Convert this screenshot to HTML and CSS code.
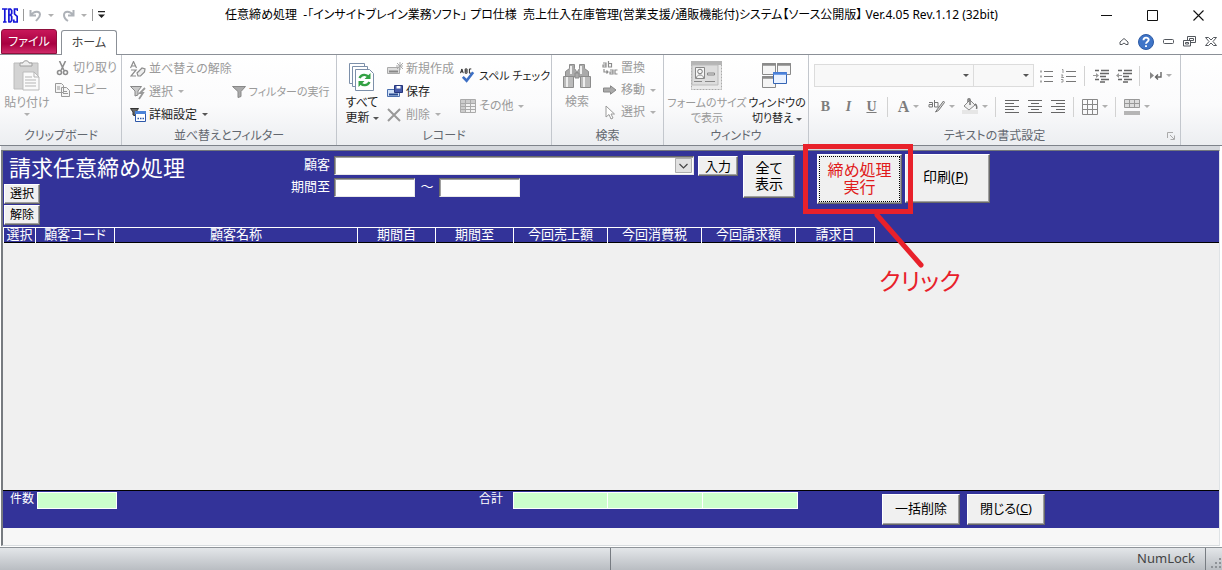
FILE: index.html
```
<!DOCTYPE html>
<html lang="ja">
<head>
<meta charset="utf-8">
<title>任意締め処理</title>
<link rel="stylesheet" href="styles.css">
</head>
<body>
<header class="titlebar">
  <div class="quick">
    <svg class="logo" width="16" height="15" viewBox="0 0 16 15" fill="none" stroke="#1414d8" stroke-width="1.700"><path d="M0 1h5.500M2.800 1v13.500M1 14h3.600M6.900.500v14M6.500 1h2l1.200 1.500v3L8.500 7H7M8.500 7l1.200 1.500v4L8.500 14h-2M15.500 3V1h-3v5l2.700 2.500V14h-3.400v-2.500"/></svg>
    <span class="qsep"></span>
    <button class="qbtn" aria-label="元に戻す"><svg width="13" height="13" viewBox="0 0 13 13" fill="none" stroke="#aeb2b8" stroke-width="2"><path d="M1.500 1v5.500H7M2 6C5 2 11 1.500 11 5.500c0 3-2.500 4.500-4 6.500"/></svg><i class="caret"></i></button>
    <button class="qbtn" aria-label="やり直し"><svg width="13" height="13" viewBox="0 0 13 13" fill="none" stroke="#aeb2b8" stroke-width="2"><path d="M11.500 1v5.500H6M11 6C8 2 2 1.500 2 6c0 3 1.500 4.500 4 6"/></svg><i class="caret"></i></button>
    <span class="qsep"></span>
    <button class="qbtn" aria-label="カスタマイズ"><svg width="7" height="8" viewBox="0 0 7 8"><path d="M0 0h7v1.300H0zM0 3.500h7L3.500 7z" fill="#222"/></svg></button>
  </div>
  <h1 class="caption">任意締め処理&nbsp; -「インサイトブレイン業務ソフト」 プロ仕様&nbsp; 売上仕入在庫管理(営業支援/通販機能付)システム【ソース公開版】 Ver.4.05 Rev.1.12 (32bit)</h1>
  <div class="winbtns">
    <button aria-label="最小化"><svg width="11" height="11"><path d="M0 5.500h11" stroke="#111"/></svg></button>
    <button aria-label="最大化"><svg width="11" height="11"><path d="M.5.5h10v10H.5z" fill="none" stroke="#111"/></svg></button>
    <button aria-label="閉じる"><svg width="11" height="11"><path d="M.5.5l10 10M10.500.5l-10 10" stroke="#111" stroke-width="1.100"/></svg></button>
  </div>
</header>

<nav class="tabs">
  <button class="tab file">ファイル</button>
  <button class="tab home">ホーム</button>
  <div class="mdi">
    <button aria-label="リボンの最小化"><svg width="10" height="8" viewBox="0 0 10 8" fill="#fff" stroke="#53575d"><path d="M1 4l4-3.500L9 4v2.500H7L5 5 3 6.500H1z"/></svg></button>
    <button aria-label="ヘルプ"><svg width="16" height="16" viewBox="0 0 16 16"><circle cx="8" cy="8" r="7.500" fill="#3f75c8" stroke="#2e5ba5"/><path d="M5.500 6.200c0-3.500 5.200-3.300 5.200-.4C10.700 7.700 8 7.700 8 9.800M8 11.200v1.900" fill="none" stroke="#fff" stroke-width="1.900"/></svg></button>
    <button aria-label="ウィンドウを最小化"><svg width="11" height="5"><rect x=".5" y=".5" width="10" height="4" rx="1" fill="none" stroke="#53575d"/></svg></button>
    <button aria-label="元のサイズに戻す"><svg width="13" height="11" fill="#fff" stroke="#53575d"><path d="M4.500.5h8v6h-8z"/><path d="M6.500 2.500h4v2h-4zM.5 4.500h7v5.500h-7z"/><path d="M2.500 6.500h3v1.500h-3z"/></svg></button>
    <button aria-label="フォームを閉じる"><svg width="12" height="9" viewBox="0 0 12 9" fill="#fff" stroke="#53575d"><path d="M.5.5h3L6 3 8.500.5h3L8 4.500l3.500 4h-3L6 6 3.500 8.500h-3L4 4.500z"/></svg></button>
  </div>
</nav>

<section class="ribbon">
  <div class="group g-clip">
    <div class="body">
      <button class="big off paste">
        <svg width="28" height="32" viewBox="0 0 28 32"><path d="M1 3h24v26H1z" fill="#d3d3d3" stroke="#bcbcbc"/><path d="M7 6V3h3c0-3 6-3 6 0h3v3z" fill="#eee" stroke="#9d9d9d"/><path d="M10 12h11l5 5v13H10z" fill="#fafafa" stroke="#bbb"/><path d="M21 12v5h5M12 17h7M12 20h11M12 23h11M12 26h11" fill="none" stroke="#b5b5b5"/></svg>
        <span>貼り付け</span><i class="caret"></i>
      </button>
      <div class="rows">
        <button class="cmd off"><svg width="12" height="15" viewBox="0 0 12 15" fill="none" stroke="#8d8d8d" stroke-width="1.600"><path d="M3 0l4.500 9.500M9 0L4.500 9.500"/><circle cx="3" cy="11.500" r="2"/><circle cx="9" cy="11.500" r="2"/></svg>切り取り</button>
        <button class="cmd off"><svg width="15" height="14" viewBox="0 0 15 14" fill="#f5f5f5" stroke="#999"><path d="M.5.5h6l2 2v7h-8zM6.500 4.500h5l3 3v6h-8z"/><path d="M2 4h3M2 6h3M8 8.500h4M8 10.500h5"/></svg>コピー</button>
      </div>
    </div>
    <div class="name">クリップボード</div>
  </div>

  <div class="group g-sort">
    <div class="body">
      <div class="rows">
        <button class="cmd off"><svg width="16" height="16" viewBox="0 0 16 16" fill="none" stroke="#8d8d8d" stroke-width="1.200"><path d="M.5 7L3.500.5 6.500 7M1.500 5h4M1 9h5L1 15h5"/><path d="M7 12l5-5 3 1-.5 3-4 4H8z" fill="#eee"/></svg>並べ替えの解除</button>
        <button class="cmd off"><svg width="16" height="16" viewBox="0 0 16 16"><path d="M.5 2.500h11L8 7v4l-3 1V7z" fill="#c9c9c9" stroke="#888"/><path d="M15 4l-5 5h3l-4 6" fill="none" stroke="#999" stroke-width="1.800"/></svg>選択<i class="caret"></i></button>
        <button class="cmd"><svg width="16" height="16" viewBox="0 0 16 16"><path d="M.5 1.500h8L6 5v4L3 8V5z" fill="#666" stroke="#333"/><path d="M5.500 4.500h10v10h-10z" fill="#fff" stroke="#2d57a8"/><path d="M5 4h11v3H5z" fill="#4b83d8"/><path d="M7.500 11.500h1.500m1 0h1.500m1 0H14" stroke="#2d57a8" stroke-width="1.500"/></svg>詳細設定<i class="caret"></i></button>
      </div>
      <button class="cmd off narrow"><svg width="14" height="12" viewBox="0 0 14 12"><path d="M.5.500h13L9 5.500v5l-3 1v-6z" fill="#aaa" stroke="#888"/></svg>フィルターの実行</button>
    </div>
    <div class="name">並べ替えとフィルター</div>
  </div>

  <div class="group g-rec">
    <div class="body">
      <button class="big refresh">
        <svg width="26" height="30" viewBox="0 0 26 30" fill="#fff" stroke="#7c8fa9"><path d="M.5.5h15v20H.5z"/><path d="M3.500 3.500h15v20h-15z"/><path d="M6.500 6.500h14l4 4v17h-18z"/><path d="M10.500 15c2-4 7-4 9-1M20.500 19c-2 4-7 4-9 1" fill="none" stroke="#34a244" stroke-width="2.400"/><path d="M21.500 10v6h-6zM9.500 24v-6h6z" fill="#34a244" stroke="none"/></svg>
        <span>すべて<br>更新<i class="caret"></i></span>
      </button>
      <div class="rows">
        <button class="cmd off"><svg width="16" height="13" viewBox="0 0 16 13"><path d="M.5 5.500h12v6H.5z" fill="#ddd" stroke="#aaa"/><path d="M2 9.500h9" stroke="#888" stroke-width="2"/><path d="M13 0v8M9 4h7M10 1l6 6M16 1l-6 6" stroke="#aaa"/></svg>新規作成</button>
        <button class="cmd"><svg width="16" height="13" viewBox="0 0 16 13"><path d="M.5 4.500h12v7H.5z" fill="#cfe0f8" stroke="#4a6fae"/><path d="M2 9.500h9" stroke="#26498e" stroke-width="2"/><path d="M7.500.5h8v7h-8z" fill="#4459a8" stroke="#26367c"/><path d="M9.500 1h4v2.500h-4z" fill="#fff"/></svg>保存</button>
        <button class="cmd off"><svg width="14" height="14"><path d="M1 1l12 12M13 1L1 13" stroke="#999" stroke-width="2"/></svg>削除<i class="caret"></i></button>
      </div>
      <div class="rows two">
        <button class="cmd narrow"><svg width="17" height="16" viewBox="0 0 17 16" fill="none"><path d="M.5 5L2 .5 3.500 5M1 3.500h2M5.500.5V5h2V.5zM5.500 2.700h2M12 .5h-2V5h2" stroke="#222"/><path d="M3 9l4 4 7-9" stroke="#3d6fc4" stroke-width="2.800"/></svg>スペル チェック</button>
        <button class="cmd off"><svg width="16" height="14"><path d="M.5.5h15v13H.5z" fill="#f2f2f2" stroke="#aaa"/><path d="M1 1h14v3H1zM1 1h4v12H1z" fill="#ccc"/><path d="M0 4.500h16M0 7.500h16M0 10.500h16M5.500 0v14M10.500 0v14" stroke="#aaa"/></svg>その他<i class="caret"></i></button>
      </div>
    </div>
    <div class="name">レコード</div>
  </div>

  <div class="group g-find">
    <div class="body">
      <button class="big off find">
        <svg width="28" height="26" viewBox="0 0 28 26" fill="#aaa" stroke="#8c8c8c"><path d="M6.500 1.500h5v4l2 3v5h-11v-5l4-3zM16.500 1.500h5v4l4 3v5h-11v-5l2-3z"/><path d="M.5 13.500h10v11H.5zM17.500 13.500h10v11h-10z" fill="#bbb"/><path d="M4 14v10M21 14v10M8 3v8M18 3v8" stroke="#eee" stroke-width="2"/><path d="M12 10h4v5h-4z"/></svg>
        <span>検索</span>
      </button>
      <div class="rows">
        <button class="cmd off"><svg width="16" height="14" viewBox="0 0 16 14" fill="none" stroke="#8b8b8b" stroke-width="1.200"><path d="M1 2h3v4H1V4h3M6.500 0v6h3V2.500h-3M2 8v3h4M4.500 9.500L6 11l-1.500 1.500M8 9h3v4H8v-2h3M15.500 9H13v4h2.500"/></svg>置換</button>
        <button class="cmd off"><svg width="14" height="10" viewBox="0 0 14 10"><path d="M.5 3h7V.8L13 5 7.500 9.200V7h-7z" fill="#aaa" stroke="#888"/></svg>移動<i class="caret"></i></button>
        <button class="cmd off"><svg width="10" height="15" viewBox="0 0 10 15"><path d="M1 1v11l3-2.500 2 4.500 2-1-2-4h3.500z" fill="#fff" stroke="#999"/></svg>選択<i class="caret"></i></button>
      </div>
    </div>
    <div class="name">検索</div>
  </div>

  <div class="group g-win">
    <div class="body">
      <button class="big off fit narrow">
        <svg width="32" height="30" viewBox="0 0 32 30" fill="none" stroke="#aaa"><path d="M.5.5h30v28H.5z" fill="#eaeaea" stroke-dasharray="2 1"/><path d="M0 0h31v4H0z" fill="#b5b5b5" stroke="none"/><path d="M1 4h26v20H1z" fill="#ddd" stroke="#bbb"/><path d="M4.500 6.500h9v11h-9z" fill="#f5f5f5" stroke="#888"/><circle cx="9" cy="10.500" r="2.300" stroke="#777"/><path d="M5.500 17c0-4 7-4 7 0M16.500 12h7v2h-7zM3 20.500h8M14 20.500h10" stroke="#888"/></svg>
        <span>フォームのサイズ<br>で表示</span>
      </button>
      <button class="big switch narrow">
        <svg width="30" height="26" viewBox="0 0 30 26" fill="#f5f5f5" stroke="#8a8a8a"><path d="M.5.5h13v11H.5zM15.500.5h13v11h-13zM.5 13.500h13v11H.5z"/><path d="M0 1.500h14M15 1.500h14M0 14.500h14" stroke-width="2.500"/><path d="M11.500 9.500h13v11h-13z" fill="#eaf2ff" stroke="#3565b5"/><path d="M11 10.500h14" stroke="#4c83dc" stroke-width="2.500"/></svg>
        <span>ウィンドウの<br>切り替え<i class="caret"></i></span>
      </button>
    </div>
    <div class="name">ウィンドウ</div>
  </div>

  <div class="group g-text">
    <div class="fmt">
      <div class="line">
        <button class="combo font" aria-label="フォント"><i class="caret dark"></i></button>
        <button class="combo size" aria-label="フォント サイズ"><i class="caret dark"></i></button>
        <button class="ico" aria-label="箇条書き"><svg width="14" height="14"><path d="M5 2.500h9M5 7.500h9M5 12.500h9" stroke="#777"/><path d="M1 1.500h2v2H1zM1 6.500h2v2H1zM1 11.500h2v2H1z" fill="#aaa"/></svg></button>
        <button class="ico" aria-label="段落番号"><svg width="15" height="14" fill="none"><path d="M5 2.500h10M5 7.500h10M5 12.500h10" stroke="#777"/><path d="M1 .5h1V4M0 6h2L.5 8.500H3M0 10.500h2V13H0" stroke="#999"/></svg></button>
        <span class="sep"></span>
        <button class="ico" aria-label="インデントを増やす"><svg width="16" height="14"><path d="M2 1.500h4m2 0h8M7 4.500h9M7 7.500h6M2 10.500h4m2 0h8M7 13h5" stroke="#666" stroke-width="1.300"/><path d="M0 6h3V4l3 2.500L3 9V7H0z" fill="#999"/></svg></button>
        <button class="ico" aria-label="インデントを減らす"><svg width="16" height="14"><path d="M2 1.500h4m2 0h8M7 4.500h9M7 7.500h6M2 10.500h4m2 0h8M7 13h5" stroke="#666" stroke-width="1.300"/><path d="M6 6H3V4L0 6.500 3 9V7h3z" fill="#999"/></svg></button>
        <span class="sep"></span>
        <button class="ico drop" aria-label="文字列の方向"><svg width="12" height="10"><path d="M0 1l4 3.500L0 8z" fill="#888"/><path d="M11 1v5H6M8 3.500L5.500 6 8 8.500" fill="none" stroke="#666" stroke-width="1.400"/></svg><i class="caret"></i></button>
      </div>
      <div class="line">
        <button class="ico serif b">B</button>
        <button class="ico serif i">I</button>
        <button class="ico serif u">U</button>
        <span class="sep"></span>
        <button class="ico drop serif a"><span>A</span><i class="caret"></i></button>
        <button class="ico drop" aria-label="蛍光ペン"><svg width="17" height="14" viewBox="0 0 17 14" fill="none" stroke="#777"><path d="M1 2.500h3.500V7H1V4.500h3.500M6.500 0v7H10V2.500H6.500"/><path d="M15.500 1l-6 8-2 3 3-1.500 6-8z" fill="#ddd"/></svg><i class="caret"></i></button>
        <button class="ico drop" aria-label="背景色"><svg width="16" height="17" viewBox="0 0 16 17"><path d="M0 12h16v4H0z" fill="#e6e6e6"/><path d="M2 8l6-6 5 5-6 5z" fill="#f0f0f0" stroke="#888"/><path d="M8 7V1.500c0-1-2-1-2 0V4M13 6c2 1 2 3 1.500 5" fill="none" stroke="#777" stroke-width="1.500"/></svg><i class="caret"></i></button>
        <span class="sep"></span>
        <button class="ico" aria-label="左揃え"><svg width="14" height="13"><path d="M0 .5h14M0 3.500h9M0 6.500h14M0 9.500h9M0 12.500h14" stroke="#666"/></svg></button>
        <button class="ico" aria-label="中央揃え"><svg width="14" height="13"><path d="M0 .5h14M3 3.500h8M0 6.500h14M3 9.500h8M0 12.500h14" stroke="#666"/></svg></button>
        <button class="ico" aria-label="右揃え"><svg width="14" height="13"><path d="M0 .5h14M5 3.500h9M0 6.500h14M5 9.500h9M0 12.500h14" stroke="#666"/></svg></button>
        <span class="sep"></span>
        <button class="ico drop" aria-label="枠線"><svg width="16" height="16"><path d="M.5.5h15v15H.5zM5.500 0v16M10.500 0v16M0 5.500h16M0 10.500h16" fill="none" stroke="#888"/></svg><i class="caret"></i></button>
        <span class="sep"></span>
        <button class="ico drop" aria-label="交互の行の色"><svg width="16" height="16"><path d="M.5.5h15v8H.5zM5.500 0v9M10.500 0v9M0 4.500h16" fill="#ddd" stroke="#999"/><path d="M0 12h16v4H0z" fill="#b5b5b5"/></svg><i class="caret"></i></button>
      </div>
    </div>
    <div class="name">テキストの書式設定
      <svg class="launch" width="8" height="8" fill="none" stroke="#aaa"><path d="M.5 6V.5H6M3 3l4 4M7.500 3.500v4h-4"/></svg>
    </div>
  </div>
</section>

<main class="form">
  <section class="head">
    <div class="lead">
      <h2>請求任意締め処理</h2>
      <button class="win small">選択</button>
      <button class="win small">解除</button>
    </div>
    <div class="fields">
      <label for="cust">顧客</label>
      <div class="selbox">
        <select id="cust"><option></option></select>
        <svg class="arrow" width="17" height="15"><path d="M.5.5h16v14H.5z" fill="#e1e1e1" stroke="#adadad"/><path d="M4.500 6l4 4 4-4" fill="none" stroke="#444" stroke-width="1.200"/></svg>
      </div>
      <label for="from">期間至</label>
      <div class="range"><input id="from" type="text"><label class="tilde" for="to">～</label><input id="to" type="text"></div>
    </div>
    <button class="win enter">入力</button>
    <button class="win all">全て<br>表示</button>
    <div class="mark">
      <button class="win exec">締め処理<br>実行</button>
      <span class="frame"></span>
      <svg class="lead-line" width="52" height="60"><path d="M3 2l44 50" stroke="#e8212b" stroke-width="5" stroke-linecap="round"/></svg>
      <span class="click">クリック</span>
    </div>
    <button class="win print">印刷(<u>P</u>)</button>
  </section>
  <section class="detail">
    <table>
      <colgroup><col class="c1"><col class="c2"><col class="c3"><col class="c4"><col class="c4"><col class="c5"><col class="c5"><col class="c5"><col></colgroup>
      <thead><tr><th>選択</th><th>顧客コード</th><th>顧客名称</th><th>期間自</th><th>期間至</th><th>今回売上額</th><th>今回消費税</th><th>今回請求額</th><th>請求日</th></tr></thead>
    </table>
  </section>
  <section class="foot">
    <div class="sum count"><label for="cnt">件数</label><output id="cnt"></output></div>
    <div class="sum total"><label for="t1">合計</label><div class="cells"><output id="t1"></output><output></output><output></output></div></div>
    <div class="acts"><button class="win">一括削除</button><button class="win">閉じる(<u>C</u>)</button></div>
  </section>
  <div class="blank"></div>
</main>

<footer class="status">
  <div class="half"></div>
  <div class="half right"><span>NumLock</span></div>
  <svg class="grip" width="12" height="14" fill="#8e9297"><path d="M9 2h2v2H9zM5 6h2v2H5zM9 6h2v2H9zM1 10h2v2H1zM5 10h2v2H5zM9 10h2v2H9z"/></svg>
</footer>
</body>
</html>
```

FILE: styles.css
```
* { box-sizing: border-box; }
html, body { height: 100%; }
body {
  margin: 0;
  display: flex;
  flex-direction: column;
  overflow: hidden;
  background: #fff;
  color: #1e1e1e;
  font: 12px/16px "Noto Sans", "Noto Sans CJK JP", sans-serif;
  font-feature-settings: "palt";
}
button, input, select {
  font: inherit;
  font-feature-settings: inherit;
  color: inherit;
  margin: 0;
  padding: 0;
  border: 0;
  border-radius: 0;
  background: none;
}
svg { display: block; flex: none; }
h1, h2 { margin: 0; font-weight: 400; }

.titlebar { display: flex; height: 30px; align-items: center; justify-content: space-between; }
.quick { display: flex; align-items: center; gap: 5px; flex: 1; padding-left: 2px; }
.qsep { width: 1px; height: 12px; background: #999; }
.qbtn { display: flex; align-items: center; gap: 6px; }
.qbtn + .qbtn { margin-left: 3px; }
.caption { font-size: 12px; white-space: nowrap; color: #000; }
.winbtns { display: flex; flex: 1; justify-content: flex-end; padding-right: 1px; }
.winbtns button { width: 46px; display: flex; justify-content: center; }

.tabs { display: flex; height: 25px; align-items: flex-end; border-bottom: 1px solid #8b9097; padding-left: 1px; }
.tab { height: 25px; }
.file { width: 56px; color: #fff; border: 1px solid #8e0f3c; border-radius: 3px 3px 0 0; background: linear-gradient(#c8185a, #a80040 60%, #cf2a68); }
.home { width: 56px; margin: 0 0 -1px 4px; border: 1px solid #8b9097; border-bottom: 0; border-radius: 3px 3px 0 0; background: #fff; color: #444; }
.mdi { display: flex; flex: 1; height: 25px; align-items: center; justify-content: flex-end; gap: 9px; padding-right: 5px; }

.caret { display: inline-block; flex: none; border: 3px solid transparent; border-top-color: #555; border-bottom: 0; vertical-align: middle; }
.off .caret, .qbtn .caret, .fmt .caret { border-top-color: #b0b0b0; }
.fmt .caret.dark { border-top-color: #555; }

.ribbon { display: flex; height: 91px; flex: none; border-bottom: 1px solid #7e838b; padding-left: 1px; background: linear-gradient(#fff, #fbfbfc 55%, #eceef1); }
.group { display: flex; flex-direction: column; flex: none; border-right: 1px solid #c3c7cd; padding-top: 2px; white-space: nowrap; }
.body { display: flex; height: 69px; }
.name { position: relative; height: 19px; line-height: 19px; text-align: center; color: #62676f; }
.big { display: flex; flex: none; flex-direction: column; align-items: center; line-height: 15px; }
.big span .caret { margin-left: 3px; }
.off { color: #9a9a9a; }
.rows { display: grid; grid-template-rows: repeat(3, 23px); justify-items: start; }
.cmd { display: flex; align-items: center; gap: 3px; }
.cmd .caret { margin-left: 2px; }
.narrow { font-size: 11px; }

.g-clip { width: 121px; }
.paste { width: 52px; padding-top: 3px; gap: 3px; }
.g-clip .rows { padding-left: 2px; grid-template-rows: repeat(3, 22px); }
.g-clip .cmd svg { width: 15px; }

.g-sort { width: 215px; }
.g-sort .body { padding: 0 7px 0 8px; justify-content: space-between; align-items: center; }

.g-rec { width: 215px; }
.refresh { width: 50px; padding-top: 6px; gap: 2px; }
.g-rec .rows svg { width: 16px; }
.two { grid-template-rows: 30px 30px; padding: 4px 0 0 6px; }

.g-find { width: 112px; }
.find { width: 50px; padding-top: 6px; gap: 5px; }
.g-find .rows { grid-template-rows: repeat(3, 22px); }
.g-find .rows svg { width: 16px; }

.g-win { width: 145px; }
.fit { width: 86px; padding-top: 4px; gap: 4px; }
.switch { width: 54px; padding-top: 6px; gap: 6px; }

.g-text { width: 372px; }
.fmt { height: 69px; padding: 7px 0 0 5px; }
.line { display: flex; height: 31px; align-items: flex-start; }
.combo { height: 23px; border: 1px solid #dcdcdc; background: #f8f8f8; display: flex; align-items: center; justify-content: flex-end; padding-right: 4px; }
.font { width: 160px; }
.size { width: 60px; border-left: 0; }
.ico { display: flex; width: 23px; height: 23px; align-items: center; justify-content: center; }
.drop { width: 33px; gap: 4px; }
.sep { width: 1px; height: 20px; margin: 2px 4px; background: #d2d2d2; }
.serif { font: 700 14px/20px "Liberation Serif", serif; color: #7d7d7d; }
.i { font-style: italic; }
.u { text-decoration: underline; }
.a { font-size: 16px; }
.launch { position: absolute; right: 5px; bottom: 5px; }

.form { display: flex; flex: 1; flex-direction: column; margin: 4px 2px 1px 1px; border: 1px solid #73777d; border-left: 2px solid #777b80; border-right-color: #dfe3e6; border-bottom-color: #d8dcdf; background: #f0f0f0; font-size: 13px; box-shadow: 0 -4px 0 #d5d8dd; }
.head { display: flex; flex: none; height: 76px; align-items: flex-start; background: #333399; color: #fff; padding-top: 3px; }
.lead { display: flex; flex-direction: column; width: 288px; align-items: flex-start; gap: 1px; padding-left: 1px; }
.lead h2 { padding-left: 5px; font-size: 22px; line-height: 26px; height: 29px; }
.win { flex: none; border: 1px solid; border-color: #fff #696969 #696969 #fff; box-shadow: inset -1px -1px #a0a0a0; background: #f0f0f0; color: #000; text-align: center; }
.small { width: 36px; height: 20px; font-size: 12px; line-height: 16px; }
.fields { display: grid; grid-template-columns: 39px 360px; grid-template-rows: 19px 19px; gap: 3px 4px; padding-top: 2px; }
.fields label { text-align: right; line-height: 16px; }
.selbox { position: relative; display: flex; }
.selbox select { width: 100%; height: 19px; appearance: none; }
.selbox select, .range input { background: #fff; border: 1px solid; border-color: #696969 #e8e8e8 #e8e8e8 #696969; box-shadow: inset 1px 1px #a0a0a0; }
.arrow { position: absolute; right: 2px; top: 2px; }
.range { display: flex; }
.range input { width: 81px; height: 19px; }
.range .tilde { width: 24px; text-align: center; }
.enter { width: 40px; height: 20px; margin: 2px 0 0 4px; line-height: 16px; }
.all { width: 52px; height: 43px; margin: 1px 0 0 5px; padding-bottom: 2px; font-size: 14px; line-height: 16px; }
.mark { position: relative; margin-left: 22px; }
.exec { width: 85px; height: 50px; padding-bottom: 1px; color: #e01b1b; font-size: 16px; line-height: 17px; outline: 1px dotted #000; outline-offset: -3px; }
.frame { position: absolute; left: -14px; top: -10px; width: 110px; height: 70px; border: 5px solid #e8212b; z-index: 1; }
.lead-line { position: absolute; left: 57px; top: 59px; z-index: 1; }
.click { position: absolute; left: 62px; top: 114px; color: #e8212b; font-size: 24px; line-height: 26px; white-space: nowrap; z-index: 1; }
.print { width: 85px; height: 49px; margin-left: 3px; padding: 0 4px 4px 0; font-size: 14px; }

.detail { flex: 1; border-bottom: 1px solid #000; background: linear-gradient(#333399 15px, #000 15px, #000 16px, #f0f0f0 16px); }
table { width: 872px; table-layout: fixed; border-collapse: collapse; color: #fff; }
th { height: 15px; padding: 0; border: 1px solid #fff; border-bottom: 0; font-weight: 400; line-height: 12px; vertical-align: top; }
.c1 { width: 32px; }
.c2 { width: 79px; }
.c3 { width: 243px; }
.c4 { width: 78px; }
.c5 { width: 94px; }

.foot { display: grid; grid-template-columns: 476px 403px 1fr; flex: none; height: 37px; background: #333399; color: #fff; padding-top: 1px; font-size: 12px; }
.sum { display: flex; line-height: 14px; }
.sum output { display: block; height: 17px; border: 1px solid #fff; background: #ccffcc; }
.count { padding-left: 7px; gap: 3px; }
.count output { width: 80px; }
.total { gap: 10px; }
.cells { display: flex; }
.cells output { width: 95px; }
.cells output + output { border-left: 0; }
.acts { display: flex; gap: 7px; padding-top: 2px; }
.acts .win { width: 78px; height: 31px; padding-bottom: 3px; font-size: 13px; }
.blank { height: 17px; flex: none; background: #f7f7f7; }

.status { display: flex; flex: none; height: 23px; border-top: 1px solid #8f9499; background: linear-gradient(#e3e6e9, #b9bdc2); color: #444; font-size: 13px; line-height: 22px; }
.half { flex: none; width: 50%; border-right: 1px solid #777c82; }
.half.right { flex: 1; width: auto; text-align: right; padding-right: 10px; line-height: 20px; }
.grip { align-self: flex-end; margin-left: 4px; }
```
